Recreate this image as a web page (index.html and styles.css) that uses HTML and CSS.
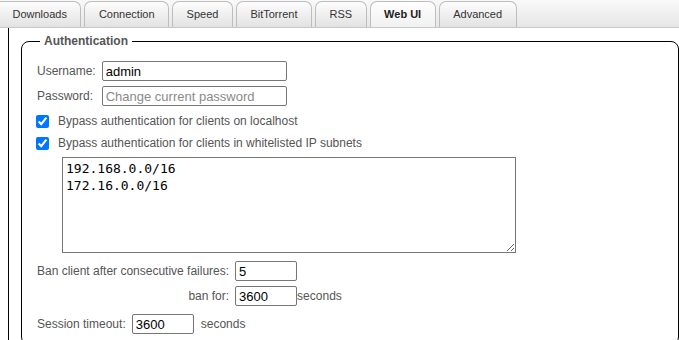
FILE: index.html
```html
<!DOCTYPE html>
<html>
<head>
<meta charset="utf-8">
<link rel="stylesheet" href="styles.css">
</head>
<body>
<nav class="tabs">
  <a class="tab">Downloads</a>
  <a class="tab">Connection</a>
  <a class="tab">Speed</a>
  <a class="tab">BitTorrent</a>
  <a class="tab">RSS</a>
  <a class="tab active">Web UI</a>
  <a class="tab">Advanced</a>
</nav>
<div class="panel">
  <fieldset class="group">
    <legend class="group-title">Authentication</legend>
    <div class="cred">
      <label class="lbl">Username:</label><input class="text" type="text" value="admin">
      <label class="lbl">Password:</label><input class="text" type="password" placeholder="Change current password">
    </div>
    <label class="check"><input class="cb" type="checkbox" checked><span class="lbl">Bypass authentication for clients on localhost</span></label>
    <label class="check"><input class="cb" type="checkbox" checked><span class="lbl">Bypass authentication for clients in whitelisted IP subnets</span></label>
    <textarea class="subnets">192.168.0.0/16
172.16.0.0/16</textarea>
    <div class="ban">
      <label class="lbl ban-label">Ban client after consecutive failures:</label>
      <span class="ban-val"><input class="num" type="text" value="5"></span>
      <label class="lbl ban-label">ban for:</label>
      <span class="ban-val"><input class="num" type="text" value="3600"><span class="lbl">seconds</span></span>
    </div>
    <div class="session">
      <label class="lbl">Session timeout:</label><input class="num" type="text" value="3600"><span class="lbl unit">seconds</span>
    </div>
  </fieldset>
</div>
</body>
</html>
```

FILE: styles.css
```css
html, body {
  margin: 0;
  padding: 0;
  background: #fff;
  overflow: hidden;
}
body {
  font-family: "Liberation Sans", Arial, sans-serif;
  font-size: 12px;
  color: #555;
}
.tabs {
  display: flex;
  align-items: flex-end;
  gap: 3px;
  height: 28px;
  box-sizing: border-box;
  padding-top: 2px;
  background: linear-gradient(#f9f9f9, #e6e6e6);
  border-bottom: 1px solid #c8c8c8;
}
.tab {
  display: block;
  height: 26px;
  box-sizing: border-box;
  padding: 0 13.5px;
  line-height: 25px;
  font-size: 11px;
  color: #333;
  border: 1px solid #bdbdbd;
  border-bottom: none;
  border-radius: 7px 7px 0 0;
  background: linear-gradient(#fdfdfd, #e2e2e2);
}
.tab:first-child {
  margin-left: -1px;
  border-left: none;
  border-top-left-radius: 0;
}
.tab.active {
  font-weight: bold;
  color: #222;
  background: linear-gradient(#ffffff, #f0f0f0);
}
.panel {
  margin-left: 8px;
  border-left: 1px solid #000;
  padding-top: 6px;
  height: 320px;
}
.group {
  margin: 0 0 0 12px;
  border: 1px solid #000;
  border-radius: 8px;
  padding: 0 0 10px 15px;
  min-width: 0;
}
.group-title {
  margin-left: 3px;
  padding: 0 4px;
  font-weight: bold;
  font-size: 12px;
  line-height: 14px;
  color: #555;
}
.lbl {
  color: #555;
  font-size: 12px;
}
.cred {
  display: grid;
  grid-template-columns: auto auto;
  justify-content: start;
  align-items: center;
  column-gap: 6px;
  row-gap: 5px;
  margin-top: 13px;
}
.text, .num {
  height: 20px;
  box-sizing: border-box;
  margin: 0;
  border: 1px solid #767676;
  border-radius: 2px;
  padding: 0 3px;
  font-family: "Liberation Sans", Arial, sans-serif;
  font-size: 13px;
  color: #000;
  background: #fff;
}
.text {
  width: 185px;
}
.text::placeholder {
  color: #8a8a8a;
}
.num {
  width: 62px;
}
.check {
  display: flex;
  align-items: center;
  height: 22px;
}
.check:first-of-type {
  margin-top: 4px;
}
.cb {
  width: 13px;
  height: 13px;
  margin: 0 9px 0 -1px;
}
.subnets {
  display: block;
  width: 454px;
  height: 96px;
  box-sizing: border-box;
  margin: 3px 0 0 25px;
  border: 1px solid #767676;
  padding: 3px;
  font-family: "DejaVu Sans Mono", monospace;
  font-size: 13px;
  line-height: 16.6px;
  color: #000;
  resize: both;
}
.ban {
  display: grid;
  grid-template-columns: auto auto;
  justify-content: start;
  align-items: center;
  column-gap: 6px;
  row-gap: 5px;
  margin-top: 8px;
}
.ban-label {
  text-align: right;
}
.ban-val {
  display: flex;
  align-items: center;
}
.session {
  display: flex;
  align-items: center;
  margin-top: 8px;
}
.session .num {
  margin-left: 6px;
}
.unit {
  margin-left: 7px;
}
```
